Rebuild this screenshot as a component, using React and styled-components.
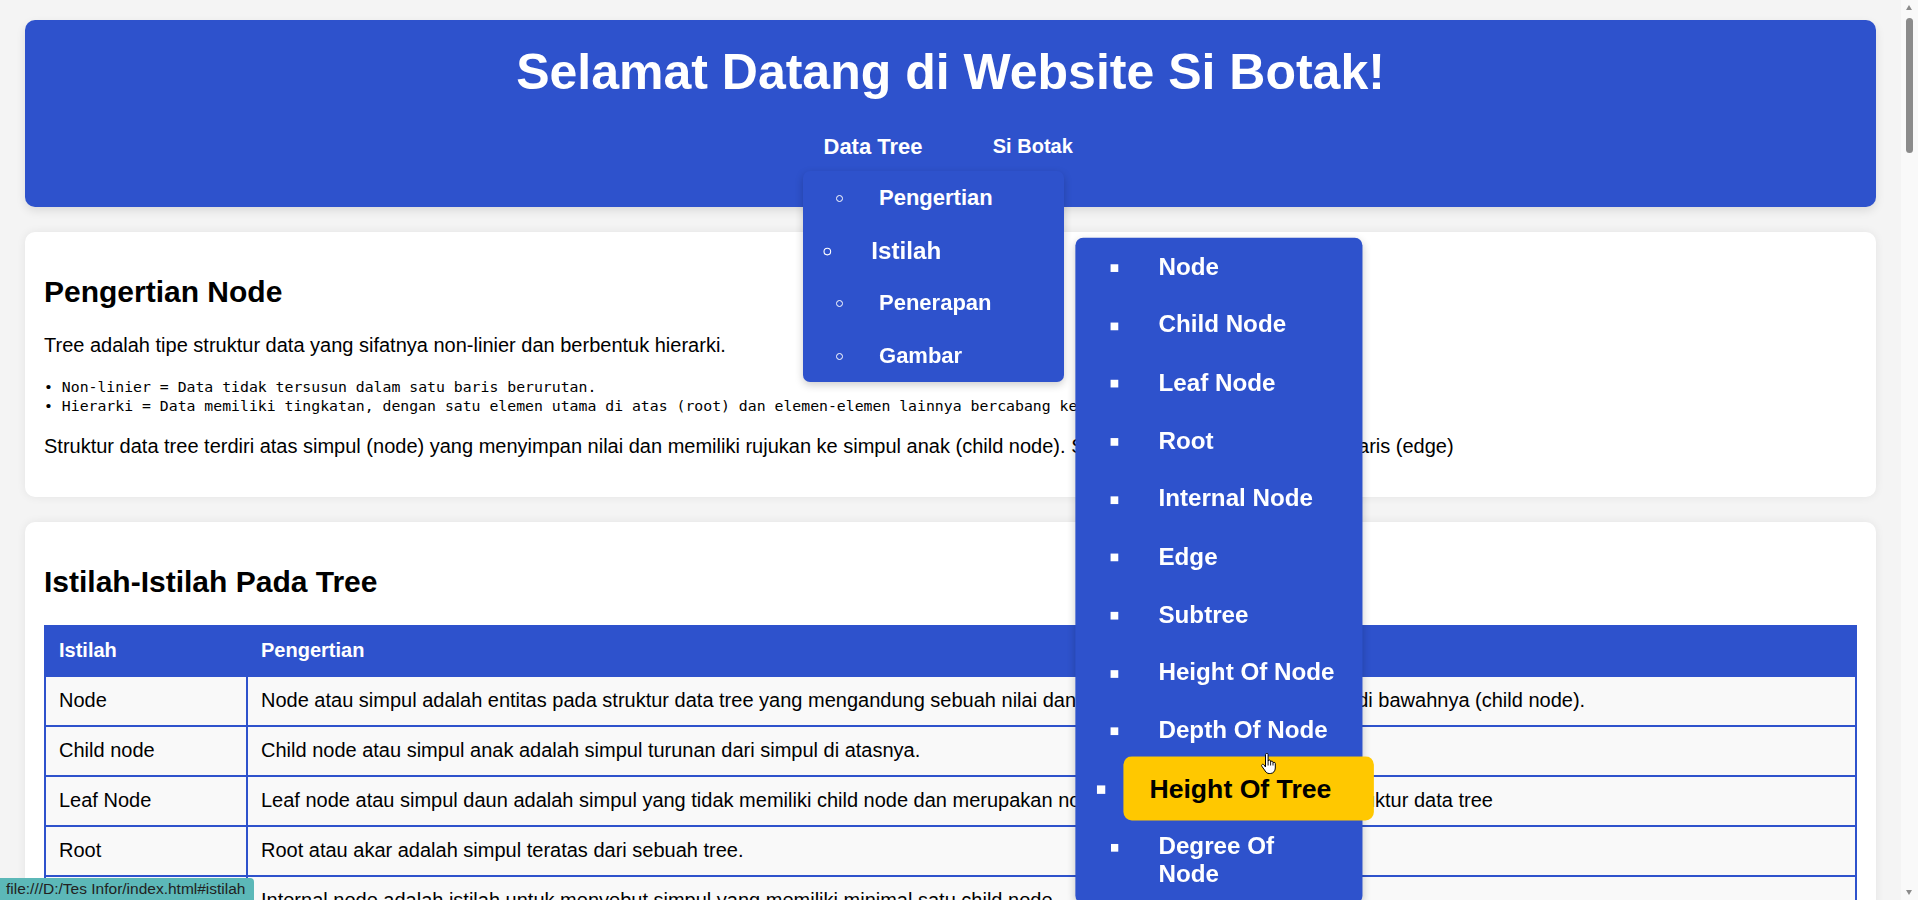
import React from 'react';
import styled, { createGlobalStyle } from 'styled-components';

const BLUE = '#2e52cc';
const YELLOW = '#ffc800';

const GlobalStyle = createGlobalStyle`
  html, body {
    margin: 0;
    padding: 0;
    height: 100%;
    overflow: hidden;
  }
  body {
    background: #f4f4f4;
    font-family: "Liberation Sans", Arial, sans-serif;
    color: #000;
  }
`;

const Page = styled.div`
  width: calc(100vw - 17px);
  box-sizing: border-box;
  padding: 20px 25px;
`;

const Header = styled.header`
  position: relative;
  z-index: 10;
  background: ${BLUE};
  border-radius: 10px;
  padding: 24px 0 39px;
  margin-bottom: 25px;
  box-shadow: 0 4px 10px rgba(0, 0, 0, 0.1);
  text-align: center;
`;

const Title = styled.h1`
  margin: 0;
  font-size: 50px;
  line-height: 57.5px;
  font-weight: bold;
  color: #fff;
`;

const NavList = styled.ul`
  list-style: none;
  margin: 23.5px 0 0;
  padding: 0;
  display: flex;
  justify-content: center;
  gap: 34.5px;
`;

const NavItem = styled.li`
  position: relative;
  padding: 10px 20px;
  font-size: 20px;
  line-height: 23px;
  font-weight: bold;
  color: #fff;
`;

const NavLabel = styled.span`
  display: inline-block;
  transform: ${(p) => (p.$active ? 'scale(1.1)' : 'none')};
`;

const Menu = styled.ul`
  position: absolute;
  top: ${(p) => p.$top}px;
  left: ${(p) => p.$left};
  width: 261px;
  margin: 0;
  padding: 0;
  list-style: none;
  background: ${BLUE};
  border-radius: 7px;
  box-shadow: 0 3px 8px rgba(0, 0, 0, 0.2);
  text-align: left;
  z-index: 20;
`;

const MenuItem = styled.li`
  position: relative;
  margin-left: 54.5px;
  padding: 13.7px 21.5px;
  font-size: 22px;
  line-height: 25.3px;
  font-weight: bold;
  color: ${(p) => (p.$hover ? '#000' : '#fff')};
  background: ${(p) => (p.$hover ? YELLOW : 'transparent')};
  border-radius: ${(p) => (p.$hover ? '7px' : '0')};
  transform: ${(p) => (p.$scaled ? 'scale(1.1)' : 'none')};

  &::before {
    content: '';
    position: absolute;
    left: -22px;
    top: 24px;
    width: 7px;
    height: 7px;
    box-sizing: border-box;
    border: ${(p) => (p.$shape === 'circle' ? '1.3px solid #fff' : 'none')};
    background: ${(p) => (p.$shape === 'square' ? '#fff' : 'transparent')};
    border-radius: ${(p) => (p.$shape === 'circle' ? '50%' : '0')};
  }
`;

const Card = styled.section`
  background: #fff;
  border-radius: 10px;
  padding: 20px 19px 39px;
  margin-bottom: 25px;
  box-shadow: 0 0 10px rgba(0, 0, 0, 0.07);
`;

const Heading = styled.h2`
  margin: 22.6px 0 25.2px;
  font-size: 30px;
  line-height: 34.5px;
  font-weight: bold;
`;

const Text = styled.p`
  margin: 0 0 20px;
  font-size: 20px;
  line-height: 23px;

  &:last-child {
    margin-bottom: 0;
  }
`;

const Pre = styled.pre`
  margin: 0 0 20px;
  font-family: "DejaVu Sans Mono", "Liberation Mono", monospace;
  font-size: 14.8px;
  line-height: 19px;
`;

const Table = styled.table`
  width: 100%;
  border-collapse: collapse;
  font-size: 20px;
  line-height: 23px;
`;

const Th = styled.th`
  width: ${(p) => p.$w || 'auto'};
  background: ${BLUE};
  color: #fff;
  text-align: left;
  font-weight: bold;
  padding: 12.5px 13px;
  border: 2px solid ${BLUE};
`;

const Td = styled.td`
  background: #f9f9f9;
  padding: 12.5px 13px;
  border: 2px solid ${BLUE};
`;

const ScrollTrack = styled.div`
  position: fixed;
  top: 0;
  right: 0;
  width: 17px;
  height: 100%;
  background: #f9f9f9;
  z-index: 100;
`;

const ScrollThumb = styled.div`
  position: absolute;
  top: 18px;
  left: 5px;
  width: 7px;
  height: 135px;
  border-radius: 4px;
  background: #8b8b8b;
`;

const ScrollArrow = styled.div`
  position: absolute;
  left: 5px;
  width: 0;
  height: 0;
  border-left: 3.5px solid transparent;
  border-right: 3.5px solid transparent;
  ${(p) =>
    p.$dir === 'up'
      ? 'top: 5px; border-bottom: 5px solid #8b8b8b;'
      : 'bottom: 5px; border-top: 5px solid #8b8b8b;'}
`;

const StatusBubble = styled.div`
  position: fixed;
  left: 0;
  bottom: 0;
  height: 22px;
  padding: 0 8px 0 6px;
  background: #5cb8b8;
  color: #222;
  font-size: 15.5px;
  line-height: 22px;
  border-top-right-radius: 4px;
  z-index: 100;
`;

const Cursor = styled.svg`
  position: fixed;
  left: 1260px;
  top: 753px;
  z-index: 100;
`;

const istilahMenu = [
  'Node',
  'Child Node',
  'Leaf Node',
  'Root',
  'Internal Node',
  'Edge',
  'Subtree',
  'Height Of Node',
  'Depth Of Node',
  'Height Of Tree',
  'Degree Of Node',
];

const rows = [
  ['Node', 'Node atau simpul adalah entitas pada struktur data tree yang mengandung sebuah nilai dan memiliki rujukan ke simpul lain di bawahnya (child node).'],
  ['Child node', 'Child node atau simpul anak adalah simpul turunan dari simpul di atasnya.'],
  ['Leaf Node', 'Leaf node atau simpul daun adalah simpul yang tidak memiliki child node dan merupakan node paling bawah dari sebuah struktur data tree'],
  ['Root', 'Root atau akar adalah simpul teratas dari sebuah tree.'],
  ['Internal Node', 'Internal node adalah istilah untuk menyebut simpul yang memiliki minimal satu child node.'],
  ['Edge', 'Edge atau garis adalah penghubung antara dua simpul.'],
  ['Subtree', 'Subtree adalah bagian dari tree yang terdiri dari sebuah simpul beserta turunannya.'],
  ['Height Of Node', 'Height of node adalah jumlah edge terpanjang dari simpul tersebut ke leaf node.'],
  ['Depth Of Node', 'Depth of node adalah jumlah edge dari root ke simpul tersebut.'],
  ['Height Of Tree', 'Height of tree adalah height dari root node.'],
  ['Degree Of Node', 'Degree of node adalah jumlah child node yang dimiliki oleh sebuah simpul.'],
];

const HandCursor = () => (
  <Cursor width="20" height="24" viewBox="0 0 20 24">
    <path
      d="M5.5 1.6c0-.8.6-1.3 1.3-1.3s1.3.5 1.3 1.3V8c.2-.7.7-1 1.3-1 .7 0 1.2.5 1.2 1.2V9c.2-.6.7-.9 1.2-.9.7 0 1.2.5 1.2 1.2v.8c.2-.5.6-.8 1.1-.8.7 0 1.2.5 1.2 1.2V15c0 3-2 5.5-5 5.5H9.2c-2 0-3-1-4-2.5L1.8 13.2c-.4-.6-.2-1.4.4-1.7.6-.4 1.3-.2 1.7.3L5.5 14z"
      fill="#fff"
      stroke="#000"
      strokeWidth="1"
      strokeLinejoin="round"
    />
    <path d="M8.1 8v4.5M10.6 9v3.5M13 10v2.5" stroke="#000" strokeWidth="0.9" fill="none" />
  </Cursor>
);

export default function App() {
  return (
    <>
      <GlobalStyle />
      <Page>
        <Header>
          <Title>Selamat Datang di Website Si Botak!</Title>
          <nav>
            <NavList>
              <NavItem>
                <NavLabel $active>Data Tree</NavLabel>
                <Menu $top={46} $left="-5.2px">
                  <MenuItem $shape="circle">Pengertian</MenuItem>
                  <MenuItem $shape="circle" $scaled>
                    Istilah
                    <Menu $top={15} $left="100%">
                      {istilahMenu.map((item) => (
                        <MenuItem
                          key={item}
                          $shape="square"
                          $scaled={item === 'Height Of Tree'}
                          $hover={item === 'Height Of Tree'}
                        >
                          {item}
                        </MenuItem>
                      ))}
                    </Menu>
                  </MenuItem>
                  <MenuItem $shape="circle">Penerapan</MenuItem>
                  <MenuItem $shape="circle">Gambar</MenuItem>
                </Menu>
              </NavItem>
              <NavItem>
                <NavLabel>Si Botak</NavLabel>
              </NavItem>
            </NavList>
          </nav>
        </Header>

        <Card id="pengertian">
          <Heading>Pengertian Node</Heading>
          <Text>Tree adalah tipe struktur data yang sifatnya non-linier dan berbentuk hierarki.</Text>
          <Pre>
            {'• Non-linier = Data tidak tersusun dalam satu baris berurutan.\n• Hierarki = Data memiliki tingkatan, dengan satu elemen utama di atas (root) dan elemen-elemen lainnya bercabang ke bawah.'}
          </Pre>
          <Text>
            Struktur data tree terdiri atas simpul (node) yang menyimpan nilai dan memiliki rujukan ke simpul anak (child node). Setiap node dihubungkan oleh garis (edge)
          </Text>
        </Card>

        <Card id="istilah">
          <Heading>Istilah-Istilah Pada Tree</Heading>
          <Table>
            <thead>
              <tr>
                <Th $w="174px">Istilah</Th>
                <Th>Pengertian</Th>
              </tr>
            </thead>
            <tbody>
              {rows.map(([term, desc]) => (
                <tr key={term}>
                  <Td>{term}</Td>
                  <Td>{desc}</Td>
                </tr>
              ))}
            </tbody>
          </Table>
        </Card>
      </Page>

      <ScrollTrack>
        <ScrollArrow $dir="up" />
        <ScrollThumb />
        <ScrollArrow $dir="down" />
      </ScrollTrack>
      <StatusBubble>file:///D:/Tes Infor/index.html#istilah</StatusBubble>
      <HandCursor />
    </>
  );
}
